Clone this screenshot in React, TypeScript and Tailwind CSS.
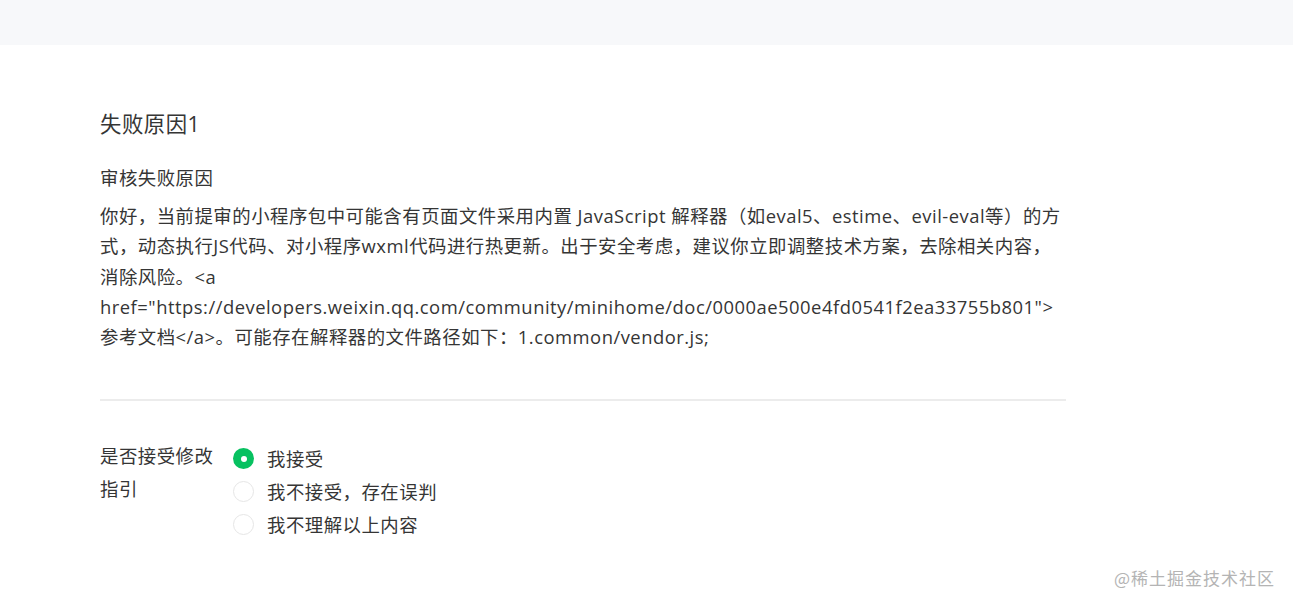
import { useState } from "react";

const options = ["我接受", "我不接受，存在误判", "我不理解以上内容"];

export default function App() {
  const [choice, setChoice] = useState(0);

  return (
    <div
      className="relative min-h-screen bg-white text-[#353535] tracking-[0.5px]"
      style={{ fontFamily: '"Open Sans", "Noto Sans CJK SC", sans-serif' }}
    >
      {/* top bar */}
      <div className="h-[45px] bg-[#f7f8fa]" />

      <div className="px-[100px] pt-[64px]">
        <div className="w-[966px]">
          <h2 className="text-[21.4px] leading-[30px] font-normal text-[#353535]">失败原因1</h2>

          <div className="mt-[24px] text-[18.4px] leading-[30px]">审核失败原因</div>
          <p className="mt-[8px] text-[18.4px] leading-[30.25px]">
            你好，当前提审的小程序包中可能含有页面文件采用内置 JavaScript 解释器（如eval5、estime、evil-eval等）的方式，动态执行JS代码、对小程序wxml代码进行热更新。出于安全考虑，建议你立即调整技术方案，去除相关内容，消除风险。&lt;a href="https://developers.weixin.qq.com/community/minihome/doc/0000ae500e4fd0541f2ea33755b801"&gt;参考文档&lt;/a&gt;。可能存在解释器的文件路径如下：1.common/vendor.js;
          </p>

          <div className="mt-[47px] h-[2px] bg-[#ececec]" />

          {/* accept section */}
          <div className="mt-[38px] flex">
            <div className="w-[118px] mr-[15px] text-[18.4px] leading-[33px]">是否接受修改指引</div>
            <div className="flex flex-col pt-[3px]">
              {options.map((label, i) => (
                <label
                  key={label}
                  className="flex h-[33px] cursor-pointer items-center gap-[13px] text-[18.4px]"
                  onClick={() => setChoice(i)}
                >
                  {choice === i ? (
                    <span className="flex h-[21px] w-[21px] items-center justify-center rounded-full bg-[#07c160]">
                      <span className="h-[6px] w-[6px] rounded-full bg-white" />
                    </span>
                  ) : (
                    <span className="h-[21px] w-[21px] rounded-full border border-[#e6e6e6] bg-white" />
                  )}
                  <span>{label}</span>
                </label>
              ))}
            </div>
          </div>
        </div>
      </div>

      {/* watermark */}
      <div
        className="absolute bottom-[17px] right-[18px] text-[17px] leading-[22px] tracking-[1px] text-[#b4b4b4]"
        style={{ fontFamily: '"Noto Sans CJK SC", sans-serif' }}
      >
        @稀土掘金技术社区
      </div>
    </div>
  );
}
